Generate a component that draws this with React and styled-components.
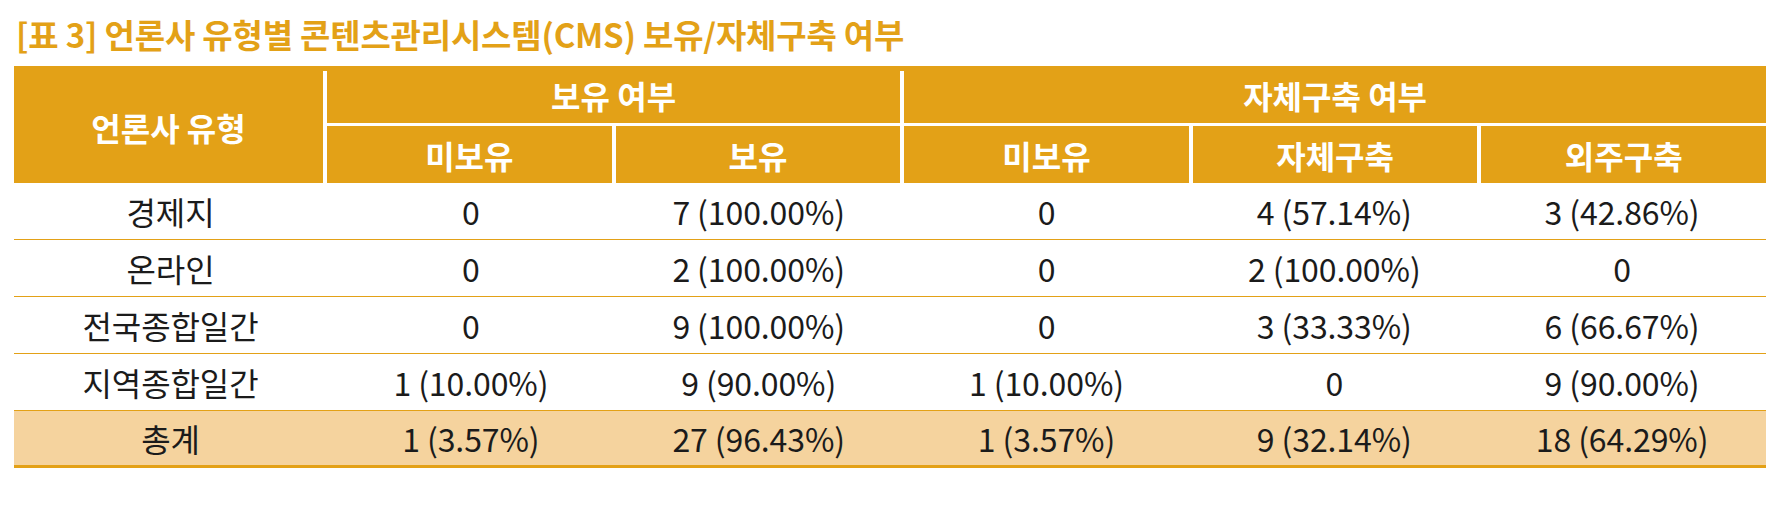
import React from 'react'
import styled, { createGlobalStyle } from 'styled-components'

const ORANGE = '#e3a117'

const GlobalStyle = createGlobalStyle`
  body {
    margin: 0;
    background: #fff;
    font-family: "Noto Sans CJK KR", "Noto Sans", sans-serif;
  }
`

const Page = styled.div`
  width: 1791px;
  padding: 13px 25px 0 14px;
  box-sizing: border-box;
`

const Title = styled.h2`
  margin: 0 0 10px 2px;
  font-size: 33px;
  line-height: 43px;
  font-weight: 700;
  color: ${ORANGE};
  letter-spacing: -0.2px;
`

const Head = styled.div`
  display: grid;
  grid-template-columns: 309px repeat(5, 1fr);
  grid-template-rows: 52px 57px;
  column-gap: 4px;
  row-gap: 3px;
  background: #fff;
  border-top: 5px solid ${ORANGE};
`

const HeadCell = styled.div`
  background: ${ORANGE};
  color: #fff;
  font-size: 32px;
  font-weight: 700;
  display: flex;
  align-items: center;
  justify-content: center;
  grid-column: ${p => p.$col || 'auto'};
  grid-row: ${p => p.$row || 'auto'};
  padding-bottom: ${p => (p.$top ? '4px' : '0')};
`

const Row = styled.div`
  display: grid;
  grid-template-columns: 313px repeat(5, 1fr);
  height: 57px;
  box-sizing: border-box;
  background: ${p => (p.$total ? '#f5d39e' : '#fff')};
  border-bottom: ${p => (p.$total ? `3px solid ${ORANGE}` : `1px solid ${ORANGE}`)};
`

const Cell = styled.div`
  display: flex;
  align-items: center;
  justify-content: center;
  font-size: 32px;
  color: #1b1b1b;
  letter-spacing: -0.1px;
`

const rows = [
  ['경제지', '0', '7 (100.00%)', '0', '4 (57.14%)', '3 (42.86%)'],
  ['온라인', '0', '2 (100.00%)', '0', '2 (100.00%)', '0'],
  ['전국종합일간', '0', '9 (100.00%)', '0', '3 (33.33%)', '6 (66.67%)'],
  ['지역종합일간', '1 (10.00%)', '9 (90.00%)', '1 (10.00%)', '0', '9 (90.00%)'],
]

const total = ['총계', '1 (3.57%)', '27 (96.43%)', '1 (3.57%)', '9 (32.14%)', '18 (64.29%)']

export default function App() {
  return (
    <Page>
      <GlobalStyle />
      <Title>[표 3] 언론사 유형별 콘텐츠관리시스템(CMS) 보유/자체구축 여부</Title>
      <Head>
        <HeadCell $col="1" $row="1 / span 2">언론사 유형</HeadCell>
        <HeadCell $col="2 / span 2" $row="1" $top>보유 여부</HeadCell>
        <HeadCell $col="4 / span 3" $row="1" $top>자체구축 여부</HeadCell>
        <HeadCell $row="2">미보유</HeadCell>
        <HeadCell $row="2">보유</HeadCell>
        <HeadCell $row="2">미보유</HeadCell>
        <HeadCell $row="2">자체구축</HeadCell>
        <HeadCell $row="2">외주구축</HeadCell>
      </Head>
      {rows.map((r, i) => (
        <Row key={i}>
          {r.map((c, j) => <Cell key={j}>{c}</Cell>)}
        </Row>
      ))}
      <Row $total>
        {total.map((c, j) => <Cell key={j}>{c}</Cell>)}
      </Row>
    </Page>
  )
}
